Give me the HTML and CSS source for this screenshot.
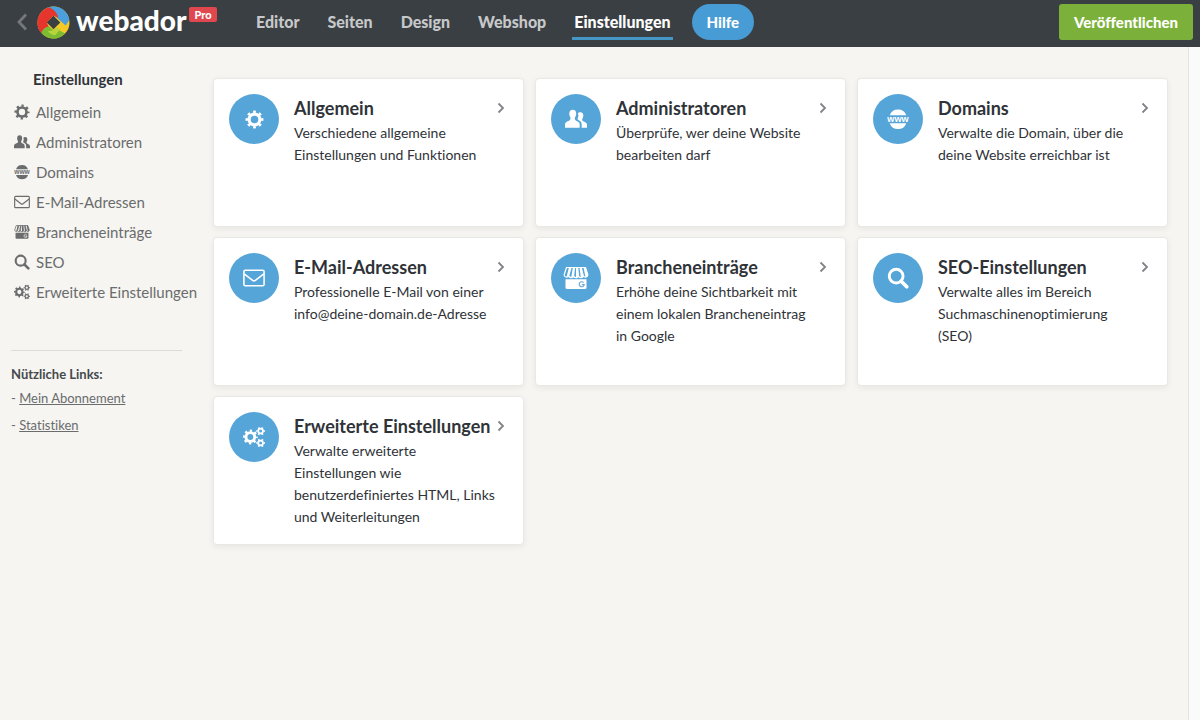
FILE: index.html
```html
<!DOCTYPE html>
<html lang="de">
<head>
<meta charset="utf-8">
<meta name="viewport" content="width=device-width, initial-scale=1">
<title>Einstellungen – Webador</title>
<link rel="stylesheet" href="styles.css">
</head>
<body>
<svg class="sprite" aria-hidden="true">
  <symbol id="gear" viewBox="0 0 24 24">
    <circle cx="12" cy="12" r="6.8" fill="none" stroke="currentColor" stroke-width="4"/>
    <circle cx="12" cy="12" r="9.500" fill="none" stroke="currentColor" stroke-width="3.600" pathLength="80" stroke-dasharray="4.6 5.4" stroke-dashoffset="2.3"/>
  </symbol>
  <symbol id="users" viewBox="0 0 24 24">
    <path fill="currentColor" d="M8.500 2C11 2 12.200 3.800 12.200 6.200c0 2-.9 3.400-1.400 4.500-.4 1 .1 2.200 1 2.800 2 1.300 4 1.500 4.200 4V21.500H0V18c.1-3 2.500-3.200 4.700-4.500 1-.6 1.700-1.700 1.300-2.800C5.500 9.500 4.700 8.200 4.700 6.200 4.700 3.800 6 2 8.500 2z"/>
    <path fill="currentColor" d="M14 5.800c.6-.8 1.500-1.300 2.800-1.300 2.300 0 3.200 1.600 3.200 3.700 0 1.700-.8 2.800-1.200 3.800-.3.900.1 1.800.8 2.300 1.900 1.200 4.300 1.500 4.400 4v3.200h-5.800v-3.800c0-3-2.200-3.700-4-4.900-.5-.4-.6-.8-.3-1.600.6-1.500 1.200-3 .1-5.400z"/>
  </symbol>
  <symbol id="www" viewBox="0 0 24 24">
    <path fill="currentColor" d="M3 8a9.500 9.500 0 0 1 18 0zM3 16.500a9.500 9.500 0 0 0 18 0z"/>
    <text class="www-text" x="12" y="15" text-anchor="middle" fill="currentColor">www</text>
  </symbol>
  <symbol id="mail" viewBox="0 0 24 24">
    <rect x="1" y="3.500" width="22" height="17" rx="1.500" fill="none" stroke="currentColor" stroke-width="1.700"/>
    <path d="M1.300 7.500l9.200 7.200q1.500 1.200 3 0l9.200-7.200" fill="none" stroke="currentColor" stroke-width="1.700"/>
  </symbol>
  <symbol id="shop" viewBox="0 0 26 24">
    <path fill="currentColor" d="M2.500 13.200h21V21.500a1.500 1.500 0 0 1-1.500 1.500H4a1.500 1.500 0 0 1-1.500-1.500z"/>
    <path fill="none" stroke="currentColor" stroke-width="1.200" stroke-linejoin="round" d="M3.500 1.500h19l2.400 7.500a2.400 2.400 0 0 1-4.700.3 2.400 2.400 0 0 1-4.800 0 2.400 2.400 0 0 1-4.800 0 2.400 2.400 0 0 1-4.800 0 2.400 2.400 0 0 1-4.700-.3zM8 1.500L5.800 9.300M11.500 1.500l-.9 7.800M14.700 1.500l.7 7.800M18.200 1.500l2 7.800"/>
    <path fill="currentColor" d="M5.900 1.500H8L5.800 9.300a2.400 2.400 0 0 1-2.300 2zM9.900 1.500h1.600l-.9 7.800a2.400 2.400 0 0 1-2.400 2.200zM13 1.500h1.700l.7 7.800a2.400 2.400 0 0 1-2.400 2.200zM16.500 1.500h1.700l2 7.800a2.400 2.400 0 0 1-2.400 2.200zM20.500 1.500h2l2.400 7.500a2.400 2.400 0 0 1-2.300 2.400z"/>
    <path class="shop-g" fill="none" stroke-width="1.200" d="M20.600 16.600a2.500 2.500 0 1 0 .6 2h-2.400"/>
  </symbol>
  <symbol id="search" viewBox="0 0 24 24">
    <circle cx="10" cy="10" r="7.500" fill="none" stroke="currentColor" stroke-width="3.200"/>
    <path d="M15.500 15.500l6 6" stroke="currentColor" stroke-width="4" stroke-linecap="round"/>
  </symbol>
  <symbol id="gears" viewBox="0 0 24 24">
    <g fill="none" stroke="currentColor">
      <circle cx="8" cy="12" r="4.800" stroke-width="3.200"/>
      <circle cx="8" cy="12" r="6.800" stroke-width="2.600" pathLength="80" stroke-dasharray="4.600 5.400" stroke-dashoffset="2.300"/>
      <circle cx="19.200" cy="5.500" r="2.600" stroke-width="1.900"/>
      <circle cx="19.200" cy="5.500" r="3.900" stroke-width="1.600" pathLength="60" stroke-dasharray="4.600 5.400" stroke-dashoffset="2.300"/>
      <circle cx="19.200" cy="18.500" r="2.600" stroke-width="1.900"/>
      <circle cx="19.200" cy="18.500" r="3.900" stroke-width="1.600" pathLength="60" stroke-dasharray="4.600 5.400" stroke-dashoffset="2.300"/>
    </g>
  </symbol>
  <symbol id="chevron" viewBox="0 0 8 12">
    <path d="M1.500 1.500L6 6l-4.500 4.500" fill="none" stroke="currentColor" stroke-width="1.800"/>
  </symbol>
</svg>

<header class="topbar">
  <button class="back" type="button" aria-label="Zurück">
    <svg viewBox="0 0 12 18"><path d="M10 1.500L3 9l7 7.500" fill="none" stroke="currentColor" stroke-width="2.800"/></svg>
  </button>
  <a class="brand" href="#">
    <svg class="logo" viewBox="0 0 34 34" aria-hidden="true">
      <circle cx="17" cy="17" r="16.500" fill="#f6c927"/>
      <path fill="#4a9fdc" d="M10 2A16.500 16.500 0 0 1 33.300 14.500L29.500 20 17 9z"/>
      <path fill="#7dbb32" d="M29 28.300A16.500 16.500 0 0 1 2 24L5 15l12 10 4-1z"/>
      <path fill="#e5352d" d="M4.500 28A16.500 16.500 0 0 1 12 1.300Q20 4 22 12l-5-2-7 7 2 4q-6 1-7.500 7z"/>
      <path fill="#b9d43a" d="M17 25l3-3 4 2-5 6q-4 0-8-4z"/>
      <path fill="#3a3f43" d="M17 10l7 7-7 7-7-7z"/>
    </svg>
    <span class="brand-name">webador</span>
    <span class="badge">Pro</span>
  </a>
  <nav class="mainnav" aria-label="Hauptnavigation">
    <a href="#">Editor</a>
    <a href="#">Seiten</a>
    <a href="#">Design</a>
    <a href="#">Webshop</a>
    <a class="active" href="#" aria-current="page">Einstellungen</a>
  </nav>
  <button class="help" type="button">Hilfe</button>
  <button class="publish" type="button">Veröffentlichen</button>
</header>

<div class="page">
  <aside class="sidebar">
    <h2 class="side-title">Einstellungen</h2>
    <nav class="sidenav" aria-label="Einstellungen">
      <a href="#"><svg class="icon"><use href="#gear"/></svg>Allgemein</a>
      <a href="#"><svg class="icon"><use href="#users"/></svg>Administratoren</a>
      <a href="#"><svg class="icon"><use href="#www"/></svg>Domains</a>
      <a href="#"><svg class="icon"><use href="#mail"/></svg>E-Mail-Adressen</a>
      <a href="#"><svg class="icon"><use href="#shop"/></svg>Brancheneinträge</a>
      <a href="#"><svg class="icon"><use href="#search"/></svg>SEO</a>
      <a href="#"><svg class="icon"><use href="#gears"/></svg>Erweiterte Einstellungen</a>
    </nav>
    <section class="useful">
      <h3>Nützliche Links:</h3>
      <p>- <a href="#">Mein Abonnement</a></p>
      <p>- <a href="#">Statistiken</a></p>
    </section>
  </aside>

  <main class="cards">
    <a class="card" href="#">
      <span class="disc small"><svg><use href="#gear"/></svg></span>
      <span class="card-body">
        <span class="card-title">Allgemein<svg class="chevron"><use href="#chevron"/></svg></span>
        <span class="card-text">Verschiedene allgemeine Einstellungen und Funktionen</span>
      </span>
    </a>
    <a class="card" href="#">
      <span class="disc"><svg><use href="#users"/></svg></span>
      <span class="card-body">
        <span class="card-title">Administratoren<svg class="chevron"><use href="#chevron"/></svg></span>
        <span class="card-text">Überprüfe, wer deine Website bearbeiten darf</span>
      </span>
    </a>
    <a class="card" href="#">
      <span class="disc"><svg><use href="#www"/></svg></span>
      <span class="card-body">
        <span class="card-title">Domains<svg class="chevron"><use href="#chevron"/></svg></span>
        <span class="card-text">Verwalte die Domain, über die deine Website erreichbar ist</span>
      </span>
    </a>
    <a class="card" href="#">
      <span class="disc"><svg><use href="#mail"/></svg></span>
      <span class="card-body">
        <span class="card-title">E-Mail-Adressen<svg class="chevron"><use href="#chevron"/></svg></span>
        <span class="card-text">Professionelle E-Mail von einer info@deine-domain.de-Adresse</span>
      </span>
    </a>
    <a class="card" href="#">
      <span class="disc wide"><svg><use href="#shop"/></svg></span>
      <span class="card-body">
        <span class="card-title">Brancheneinträge<svg class="chevron"><use href="#chevron"/></svg></span>
        <span class="card-text">Erhöhe deine Sichtbarkeit mit einem lokalen Brancheneintrag in Google</span>
      </span>
    </a>
    <a class="card" href="#">
      <span class="disc"><svg><use href="#search"/></svg></span>
      <span class="card-body">
        <span class="card-title">SEO-Einstellungen<svg class="chevron"><use href="#chevron"/></svg></span>
        <span class="card-text">Verwalte alles im Bereich Suchmaschinenoptimierung (SEO)</span>
      </span>
    </a>
    <a class="card" href="#">
      <span class="disc"><svg><use href="#gears"/></svg></span>
      <span class="card-body">
        <span class="card-title">Erweiterte Einstellungen<svg class="chevron"><use href="#chevron"/></svg></span>
        <span class="card-text">Verwalte erweiterte Einstellungen wie benutzerdefiniertes HTML, Links und Weiterleitungen</span>
      </span>
    </a>
  </main>
</div>
</body>
</html>
```

FILE: styles.css
```css
* {
  box-sizing: border-box;
}

body {
  margin: 0;
  min-height: 100vh;
  display: flex;
  flex-direction: column;
  background: #fbfafa;
  color: #2f3338;
  font-family: "Lato", "Liberation Sans", sans-serif;
  font-size: 14px;
  font-variant-ligatures: none;
}

a {
  color: inherit;
  text-decoration: none;
}

button {
  border: 0;
  padding: 0;
  font: inherit;
  color: inherit;
  background: none;
  cursor: pointer;
}

.sprite {
  display: none;
}

/* Top bar */
.topbar {
  display: flex;
  align-items: center;
  height: 47px;
  padding: 0 7px 3px 16px;
  background: #3a3f43;
  color: #fff;
  font-size: 16px;
  font-weight: 900;
}

.back {
  width: 12px;
  height: 18px;
  color: #74787b;
}

.back svg {
  display: block;
}

.brand {
  display: flex;
  align-items: center;
  width: 211px;
  margin-left: 9px;
}

.logo {
  width: 33px;
  height: 33px;
}

.brand-name {
  margin-left: 6px;
  font-size: 28px;
  line-height: 28px;
  padding-bottom: 4px;
}

.badge {
  align-self: flex-start;
  margin: 1px 0 0 3px;
  padding: 0 5px;
  border-radius: 2px;
  background: #e0474f;
  font-size: 11px;
  line-height: 15px;
}

.mainnav {
  display: flex;
  gap: 24px;
  margin-left: 6px;
  color: #c6c8ca;
}

.mainnav a {
  padding: 8px 2px 6px;
  border-bottom: 3px solid transparent;
  line-height: 19px;
}

.mainnav .active {
  color: #fff;
  border-color: #4496c4;
}

.help,
.publish {
  height: 36px;
  padding: 0 15px;
  font-size: 15px;
}

.help {
  margin-left: 19px;
  border-radius: 18px;
  background: #489cd5;
}

.publish {
  margin-left: auto;
  border-radius: 3px;
  background: #7bb13a;
}

/* Page */
.page {
  flex: 1;
  display: flex;
  align-items: flex-start;
  margin-right: 11px;
  padding: 31px 20px 31px 0;
  border-right: 1px solid #e3e3e5;
  background: #f6f5f1;
}

.sidebar {
  flex: 0 0 213px;
  padding-left: 11px;
  color: #6a6c6d;
}

.side-title {
  margin: -9px 0 0 22px;
  color: #2f3338;
  font-size: 15px;
  line-height: 20px;
}

.sidenav {
  --cutout: #f6f5f1;
  display: flex;
  flex-direction: column;
  margin-top: 8px;
  font-size: 15px;
  line-height: 30px;
  white-space: nowrap;
}

.sidenav a {
  display: flex;
  align-items: center;
}

.icon {
  width: 16px;
  height: 16px;
  margin: 0 6px 0 3px;
}

.www-text {
  font-family: "Liberation Sans", sans-serif;
  font-size: 10px;
  font-weight: 700;
}

.shop-g {
  stroke: var(--cutout);
}

.useful {
  margin: 43px 31px 0 0;
  padding-top: 12px;
  border-top: 1px solid #dddcd8;
  font-size: 13px;
}

.useful h3 {
  margin: 0;
  color: #45494d;
  font-size: 13px;
  line-height: 22px;
}

.useful p {
  margin: 0;
  line-height: 27px;
}

.useful a {
  text-decoration: underline;
}

/* Cards */
.cards {
  flex: 1;
  display: grid;
  grid-template-columns: repeat(3, minmax(0, 1fr));
  grid-auto-rows: 1fr;
  gap: 10px 11px;
}

.card {
  --cutout: #6fa9d3;
  display: flex;
  gap: 15px;
  padding: 15px 15px 16px;
  border: 1px solid #e9e8e4;
  border-radius: 4px;
  background: #fff;
  box-shadow: 0 2px 6px #00000010;
}

.disc {
  flex: none;
  display: flex;
  align-items: center;
  justify-content: center;
  width: 50px;
  height: 50px;
  border-radius: 50%;
  background: #56a5d8;
  color: #fff;
}

.disc svg {
  width: 22px;
  height: 22px;
}

.disc.small svg {
  width: 19px;
  height: 19px;
}

.disc.wide svg {
  width: 26px;
  height: 24px;
}

.card-body {
  flex: 1;
  min-width: 0;
}

.card-title {
  display: flex;
  align-items: center;
  justify-content: space-between;
  padding-right: 3px;
  font-size: 18px;
  font-weight: 700;
  line-height: 28px;
  white-space: nowrap;
}

.chevron {
  flex: none;
  width: 8px;
  height: 12px;
  color: #808386;
}

.card-text {
  display: block;
  padding-right: 10px;
  line-height: 22px;
}
```
